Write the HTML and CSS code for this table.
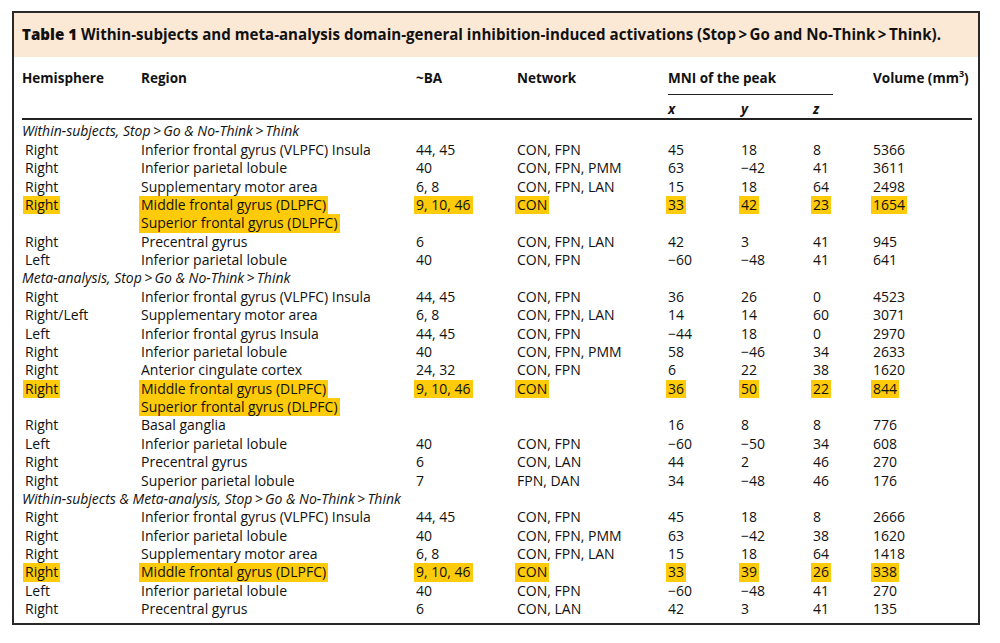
FILE: index.html
```html
<!DOCTYPE html>
<html>
<head>
<meta charset="utf-8">
<link rel="stylesheet" href="styles.css">
</head>
<body>
<div class="box">
  <div class="caption"><b>Table 1</b> Within-subjects and meta-analysis domain-general inhibition-induced activations (Stop&thinsp;&gt;&thinsp;Go and No-Think&thinsp;&gt;&thinsp;Think).</div>
  <table class="tbl">
    <colgroup>
      <col class="c-hem"><col class="c-reg"><col class="c-ba"><col class="c-net"><col class="c-x"><col class="c-y"><col class="c-z"><col class="c-vol">
    </colgroup>
    <thead>
      <tr class="h1">
        <th>Hemisphere</th><th>Region</th><th>~BA</th><th>Network</th>
        <th colspan="3"><div class="mni">MNI of the peak</div></th>
        <th>Volume (mm<sup>3</sup>)</th>
      </tr>
      <tr class="h2">
        <th></th><th></th><th></th><th></th><th><i>x</i></th><th><i>y</i></th><th><i>z</i></th><th></th>
      </tr>
    </thead>
    <tbody>
      <tr class="grp first"><td colspan="8">Within-subjects, Stop&thinsp;&gt;&thinsp;Go &amp; No-Think&thinsp;&gt;&thinsp;Think</td></tr>
      <tr><td>Right</td><td>Inferior frontal gyrus (VLPFC) Insula</td><td>44, 45</td><td>CON, FPN</td><td>45</td><td>18</td><td>8</td><td>5366</td></tr>
      <tr><td>Right</td><td>Inferior parietal lobule</td><td>40</td><td>CON, FPN, PMM</td><td>63</td><td>−42</td><td>41</td><td>3611</td></tr>
      <tr><td>Right</td><td>Supplementary motor area</td><td>6, 8</td><td>CON, FPN, LAN</td><td>15</td><td>18</td><td>64</td><td>2498</td></tr>
      <tr><td><span class="hl">Right</span></td><td><span class="hl">Middle frontal gyrus (DLPFC)</span><br><span class="hl">Superior frontal gyrus (DLPFC)</span></td><td><span class="hl">9, 10, 46</span></td><td><span class="hl">CON</span></td><td><span class="hl">33</span></td><td><span class="hl">42</span></td><td><span class="hl">23</span></td><td><span class="hl">1654</span></td></tr>
      <tr><td>Right</td><td>Precentral gyrus</td><td>6</td><td>CON, FPN, LAN</td><td>42</td><td>3</td><td>41</td><td>945</td></tr>
      <tr><td>Left</td><td>Inferior parietal lobule</td><td>40</td><td>CON, FPN</td><td>−60</td><td>−48</td><td>41</td><td>641</td></tr>
      <tr class="grp"><td colspan="8">Meta-analysis, Stop&thinsp;&gt;&thinsp;Go &amp; No-Think&thinsp;&gt;&thinsp;Think</td></tr>
      <tr><td>Right</td><td>Inferior frontal gyrus (VLPFC) Insula</td><td>44, 45</td><td>CON, FPN</td><td>36</td><td>26</td><td>0</td><td>4523</td></tr>
      <tr><td>Right/Left</td><td>Supplementary motor area</td><td>6, 8</td><td>CON, FPN, LAN</td><td>14</td><td>14</td><td>60</td><td>3071</td></tr>
      <tr><td>Left</td><td>Inferior frontal gyrus Insula</td><td>44, 45</td><td>CON, FPN</td><td>−44</td><td>18</td><td>0</td><td>2970</td></tr>
      <tr><td>Right</td><td>Inferior parietal lobule</td><td>40</td><td>CON, FPN, PMM</td><td>58</td><td>−46</td><td>34</td><td>2633</td></tr>
      <tr><td>Right</td><td>Anterior cingulate cortex</td><td>24, 32</td><td>CON, FPN</td><td>6</td><td>22</td><td>38</td><td>1620</td></tr>
      <tr><td><span class="hl">Right</span></td><td><span class="hl">Middle frontal gyrus (DLPFC)</span><br><span class="hl">Superior frontal gyrus (DLPFC)</span></td><td><span class="hl">9, 10, 46</span></td><td><span class="hl">CON</span></td><td><span class="hl">36</span></td><td><span class="hl">50</span></td><td><span class="hl">22</span></td><td><span class="hl">844</span></td></tr>
      <tr><td>Right</td><td>Basal ganglia</td><td></td><td></td><td>16</td><td>8</td><td>8</td><td>776</td></tr>
      <tr><td>Left</td><td>Inferior parietal lobule</td><td>40</td><td>CON, FPN</td><td>−60</td><td>−50</td><td>34</td><td>608</td></tr>
      <tr><td>Right</td><td>Precentral gyrus</td><td>6</td><td>CON, LAN</td><td>44</td><td>2</td><td>46</td><td>270</td></tr>
      <tr><td>Right</td><td>Superior parietal lobule</td><td>7</td><td>FPN, DAN</td><td>34</td><td>−48</td><td>46</td><td>176</td></tr>
      <tr class="grp"><td colspan="8">Within-subjects &amp; Meta-analysis, Stop&thinsp;&gt;&thinsp;Go &amp; No-Think&thinsp;&gt;&thinsp;Think</td></tr>
      <tr><td>Right</td><td>Inferior frontal gyrus (VLPFC) Insula</td><td>44, 45</td><td>CON, FPN</td><td>45</td><td>18</td><td>8</td><td>2666</td></tr>
      <tr><td>Right</td><td>Inferior parietal lobule</td><td>40</td><td>CON, FPN, PMM</td><td>63</td><td>−42</td><td>38</td><td>1620</td></tr>
      <tr><td>Right</td><td>Supplementary motor area</td><td>6, 8</td><td>CON, FPN, LAN</td><td>15</td><td>18</td><td>64</td><td>1418</td></tr>
      <tr><td><span class="hl">Right</span></td><td><span class="hl">Middle frontal gyrus (DLPFC)</span></td><td><span class="hl">9, 10, 46</span></td><td><span class="hl">CON</span></td><td><span class="hl">33</span></td><td><span class="hl">39</span></td><td><span class="hl">26</span></td><td><span class="hl">338</span></td></tr>
      <tr><td>Left</td><td>Inferior parietal lobule</td><td>40</td><td>CON, FPN</td><td>−60</td><td>−48</td><td>41</td><td>270</td></tr>
      <tr><td>Right</td><td>Precentral gyrus</td><td>6</td><td>CON, LAN</td><td>42</td><td>3</td><td>41</td><td>135</td></tr>
    </tbody>
  </table>
</div>
</body>
</html>
```
FILE: styles.css
```css
html, body {
  margin: 0;
  padding: 0;
  background: #ffffff;
}
body {
  padding: 11px 0 0 12px;
  font-family: "Open Sans", "Noto Sans", sans-serif;
  color: #111;
}
.box {
  width: 964px;
  height: 610px;
  border: 2px solid #2a2a2a;
  background: #fff;
  overflow: hidden;
}
.caption {
  background: #fbe8d5;
  height: 44px;
  box-sizing: border-box;
  padding: 11px 0 0 8px;
  font-weight: 700;
  font-size: 15.1px;
  line-height: 20px;
  white-space: nowrap;
}
.tbl {
  margin-left: 8px;
  width: 950px;
  border-collapse: collapse;
  table-layout: fixed;
  font-size: 14px;
  line-height: 18.38px;
}
.c-hem { width: 119px; }
.c-reg { width: 275px; }
.c-ba { width: 101px; }
.c-net { width: 151px; }
.c-x { width: 73px; }
.c-y { width: 72px; }
.c-z { width: 60px; }
.c-vol { width: 99px; }
.tbl th {
  text-align: left;
  font-weight: 700;
  font-size: 13.5px;
  padding: 0;
  white-space: nowrap;
}
.h1 th {
  vertical-align: top;
  padding-top: 12px;
  height: 27px;
}
.h1 sup {
  font-size: 9px;
  line-height: 0;
  vertical-align: 6px;
}
.mni {
  width: 165px;
  height: 26px;
  border-bottom: 1px solid #222;
  box-sizing: border-box;
}
.h2 th {
  padding-top: 4px;
  height: 18px;
  border-bottom: 2px solid #222;
  vertical-align: top;
}
.tbl td {
  padding: 0;
  vertical-align: top;
  white-space: nowrap;
}
.tbl td:first-child {
  padding-left: 3px;
}
.tbl tr.grp td {
  font-style: italic;
  padding-left: 0;
}
.tbl tr.first td {
  padding-top: 2px;
}
.hl {
  background: #fdcb0a;
  display: inline-block;
  padding: 0 2px;
  margin-left: -2px;
}
```
